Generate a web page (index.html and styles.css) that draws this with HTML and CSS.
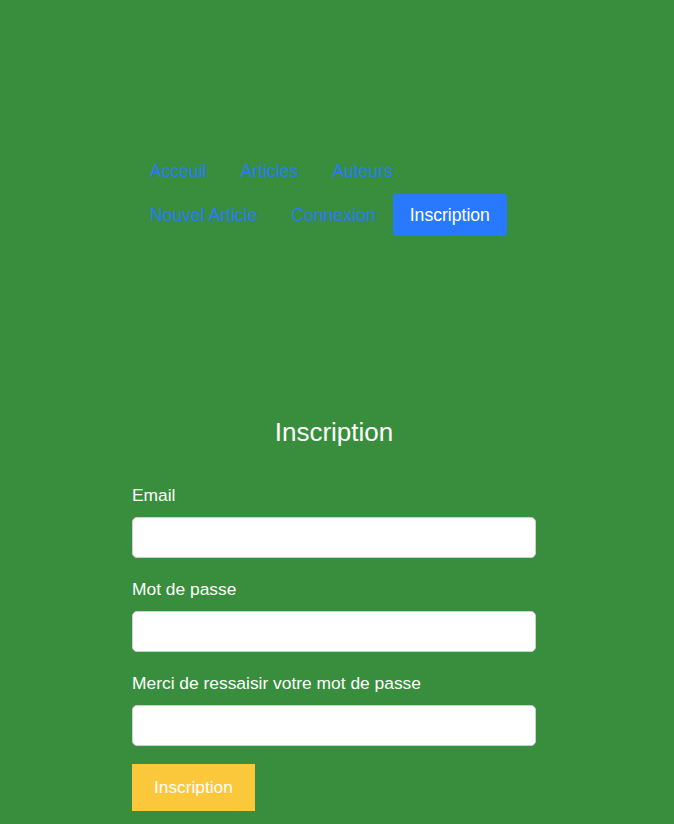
FILE: index.html
```html
<!DOCTYPE html>
<html lang="fr">
<head>
<meta charset="utf-8">
<title>Inscription</title>
<link rel="stylesheet" href="styles.css">
</head>
<body>
<div class="page">
  <header class="header">
    <nav class="nav">
      <a class="nav-link" href="#">Acceuil</a>
      <a class="nav-link" href="#">Articles</a>
      <a class="nav-link" href="#">Auteurs</a>
      <a class="nav-link" href="#">Nouvel Article</a>
      <a class="nav-link" href="#">Connexion</a>
      <a class="nav-link active" href="#">Inscription</a>
    </nav>
  </header>
  <main class="main">
    <h1 class="title">Inscription</h1>
    <form class="form">
      <label class="label" for="email">Email</label>
      <input class="input" id="email" type="email">
      <label class="label" for="pw">Mot de passe</label>
      <input class="input" id="pw" type="password">
      <label class="label" for="pw2">Merci de ressaisir votre mot de passe</label>
      <input class="input" id="pw2" type="password">
      <button class="submit" type="button">Inscription</button>
    </form>
  </main>
</div>
</body>
</html>
```
FILE: styles.css
```css
html, body {
  margin: 0;
  padding: 0;
  background: #388e3c;
  font-family: "Liberation Sans", Arial, sans-serif;
  color: #fff;
}
.page {
  width: 404px;
  margin: 0 auto;
  padding-right: 6px;
}
.header {
  padding-top: 150px;
}
.nav {
  display: flex;
  flex-wrap: wrap;
  row-gap: 2px;
  margin-left: 1px;
}
.nav-link {
  display: block;
  padding: 12px 17px;
  line-height: 18px;
  font-size: 17.6px;
  color: #2979ff;
  text-decoration: none;
  border-radius: 3px;
}
.nav-link.active {
  background: #2979ff;
  color: #fff;
}
.main {
  padding-top: 182px;
}
.title {
  margin: 0 0 39px;
  text-align: center;
  font-weight: normal;
  font-size: 26px;
  line-height: 28px;
}
.form {
  display: flex;
  flex-direction: column;
  align-items: flex-start;
}
.label {
  font-size: 17.4px;
  line-height: 20px;
  margin-bottom: 12px;
}
.input {
  box-sizing: border-box;
  width: 100%;
  height: 41px;
  margin: 0 0 21px;
  border: 1px solid #cfcfcf;
  border-radius: 5px;
  background: #fff;
  font-size: 16px;
  padding: 0 10px;
}
.input:last-of-type {
  margin-bottom: 18px;
}
.submit {
  border: none;
  background: #fbc73b;
  color: #fff;
  font-family: "Liberation Sans", Arial, sans-serif;
  font-size: 17.3px;
  line-height: 18px;
  padding: 14px 22px 15px;
}
```
